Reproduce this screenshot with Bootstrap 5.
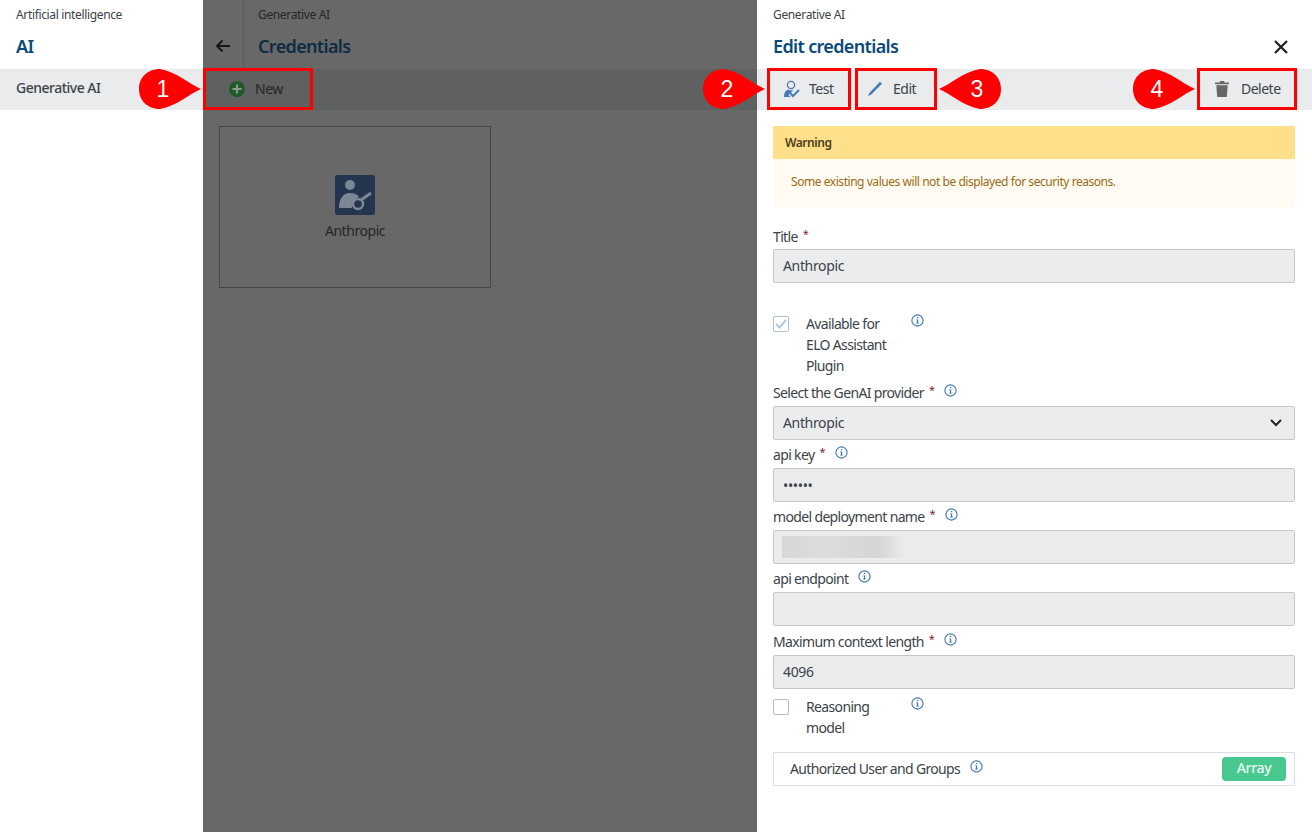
<!DOCTYPE html>
<html lang="en">
<head>
  <meta charset="UTF-8" />
  <meta name="viewport" content="width=device-width, initial-scale=1.0" />
  <title>Edit credentials</title>
  <link href="https://cdn.jsdelivr.net/npm/bootstrap@5.3.3/dist/css/bootstrap.min.css" rel="stylesheet" />
  <style>
    html, body { height: 100%; }
    body { font-family: "Noto Sans", sans-serif; font-size: 14px; letter-spacing: -.65px; color: #3c4349; overflow: hidden; background: #fff; }
    .app-shell { height: 832px; }
    .crumb { height: 28px; line-height: 29px; font-size: 12px; letter-spacing: -.35px; }
    .page-title { height: 41px; margin: 0; padding-top: 6px; font-size: 18px; line-height: 24px; font-weight: 600; color: #0a4a78; letter-spacing: -.65px; }
    .tool-band { height: 41px; background: #e9ebed; }

    .side-col { width: 203px; flex: none; }
    .side-head { padding: 0 16px; }
    .side-item { height: 41px; line-height: 38px; padding-left: 16px; background: #e9ebed; font-weight: 500; letter-spacing: -.5px; }

    .mid-col { width: 554px; flex: none; background: #686868; color: #242628; }
    .mid-top { height: 69px; }
    .back-cell { width: 41px; border-right: 1px solid #5d5d5d; }
    .mid-title-cell { padding-left: 14px; }
    .mid-col .page-title { color: #0e2c44; }
    .mid-col .tool-band { background: #5f6060; }
    .tile { width: 272px; height: 162px; margin: 16px 0 0 16px; border: 1px solid #474747; }
    .tile-icon { width: 40px; height: 40px; margin-top: 48px; }
    .tile-text { margin-top: 5px; line-height: 22px; letter-spacing: -.45px; }

    .edit-col { width: 555px; flex: none; position: relative; }
    .edit-head { padding: 0 16px; }
    .close-x { margin-top: 12px; margin-right: 8px; }
    .edit-tools { padding-left: 10px; padding-right: 15px; }
    .tool-btn { position: relative; height: 42px; margin-top: -1px; border: 3px solid #f00; border-radius: 0; padding: 0 0 1px; font-size: 14px; letter-spacing: -.5px; color: #3c4349; display: flex; align-items: center; }
    .tool-btn:hover, .tool-btn:disabled { border-color: #f00; }
    .btn-new { width: 110px; padding-left: 23px; gap: 10px; color: #242628; }
    .btn-test { width: 84px; padding-left: 13px; gap: 9px; }
    .btn-edit { width: 82px; padding-left: 9px; gap: 10px; margin-left: 4px; }
    .btn-delete { width: 100px; padding-left: 15px; gap: 12px; }

    .pin { position: absolute; top: -2px; width: 62px; height: 40px; color: #fff; font-family: "Liberation Sans", sans-serif; font-size: 23px; letter-spacing: 0; z-index: 5; }
    .pin svg { position: absolute; inset: 0; }
    .pin span { position: absolute; top: 0; line-height: 41px; width: 40px; text-align: center; }
    .pin-left { left: -67px; }
    .pin-left span { left: 4px; }
    .pin-right { right: -67px; }
    .pin-right span { right: 4px; }
    .pin-flip { transform: scaleX(-1); }

    .edit-body { padding: 16px 17px 0 16px; }
    .warn-box { border-radius: 2px; overflow: hidden; font-size: 12px; letter-spacing: -.45px; margin-bottom: 16px; }
    .warn-head { height: 33px; line-height: 33px; padding-left: 12px; background: #ffdf8a; color: #4a3d18; font-weight: 600; }
    .warn-text { height: 48px; line-height: 46px; padding-left: 18px; background: #fffbf3; color: #9a6c12; }

    .fld-label { height: 28px; display: flex; align-items: center; gap: 5px; }
    .fld-label.first { height: 26px; }
    .fld-label.tall { height: 29px; padding-top: 1px; }
    .req { color: #8b1a2b; font-size: 11px; margin-top: -4px; }
    .info-i { width: 13px; height: 13px; flex: none; margin-left: 5px; margin-top: -4px; }
    .form-control.fld-input, .form-select.fld-input { height: 34px; padding: 0 9px; font-size: 14px; letter-spacing: -.35px; background-color: #ebecee; border: 1px solid #c4c6c9; border-radius: 2px; color: #3c4349; opacity: 1; }
    .form-select.fld-input { background-image: url("data:image/svg+xml,%3csvg xmlns='http://www.w3.org/2000/svg' viewBox='0 0 12 8'%3e%3cpath fill='none' stroke='%23222' stroke-width='2' d='M1 1l5 5 5-5'/%3e%3c/svg%3e"); background-size: 12px 8px; background-position: right 12px center; }
    .form-control.input-up, .form-select.input-up { padding-bottom: 2px; }
    .blur-wrap { position: relative; }
    .blur-patch { position: absolute; left: 9px; top: 6px; width: 124px; height: 22px; background: linear-gradient(90deg, #d6d7d9 0, #dcdddf 35%, #d4d5d7 78%, #ebecee 100%); }

    .check-row { display: flex; line-height: 21px; }
    .check-first { margin-top: 30px; margin-bottom: 2px; }
    .check-second { margin-top: 7px; }
    .check-box { width: 16px; height: 16px; flex: none; margin-top: 3px; border: 1px solid #b9bcc0; border-radius: 2px; background: #fff; }
    .check-box.on { border-color: #a9c1dc; }
    .check-text { width: 90px; margin-left: 17px; margin-right: 15px; }
    .check-row .info-i { margin-left: 0; margin-top: 1px; }
    .array-row { height: 34px; margin-top: 14px; border: 1px solid #dcdee0; padding: 0 8px 2px 16px; display: flex; align-items: center; }
    .array-row .info-i { margin-left: 10px; }
    .array-pill { width: 64px; height: 24px; line-height: 22px; margin-top: 2px; margin-left: auto; text-align: center; background: #48c78e; color: #eafff5; border-radius: 4px; font-weight: 500; letter-spacing: -.3px; }
  </style>
</head>
<body>
  <svg width="0" height="0" class="position-absolute">
    <symbol id="pin-shape" viewBox="0 0 62 40"><path fill="#f00" d="M62 20C50 15 38 3 21 0 8 0 0 9 0 20s8 20 21 20C38 37 50 25 62 20Z"/></symbol>
    <symbol id="info-mark" viewBox="0 0 13 13">
      <circle cx="6.5" cy="6.5" r="5.6" fill="none" stroke="#3f77b5" stroke-width="1.1"/>
      <path fill="#3f77b5" d="M5.9 3h1.3v1.300H5.900zM5.200 5.400h2v3.300h.7v.9H5.100v-.9h.8V6.300h-.7z"/>
    </symbol>
  </svg>

  <div class="app-shell d-flex">
    <!-- left menu -->
    <div class="side-col">
      <div class="side-head">
        <div class="crumb">Artificial intelligence</div>
        <h1 class="page-title">AI</h1>
      </div>
      <div class="side-item">Generative AI</div>
    </div>

    <!-- dimmed list -->
    <div class="mid-col">
      <div class="mid-top d-flex">
        <div class="back-cell d-flex align-items-end justify-content-center">
          <svg width="16" height="14" viewBox="0 0 16 14" class="mb-3"><path fill="none" stroke="#161718" stroke-width="2" d="M15 7H2M7.500 1.500 2 7l5.500 5.500"/></svg>
        </div>
        <div class="mid-title-cell">
          <div class="crumb">Generative AI</div>
          <h2 class="page-title">Credentials</h2>
        </div>
      </div>
      <div class="tool-band d-flex">
        <button type="button" class="btn tool-btn btn-new">
          <svg width="16" height="16" viewBox="0 0 16 16"><circle cx="8" cy="8" r="8" fill="#1f5a2b"/><path stroke="#8a9a8e" stroke-width="2" d="M8 3.500v9M3.500 8h9"/></svg>
          New
          <span class="pin pin-left"><svg width="62" height="40"><use href="#pin-shape"/></svg><span>1</span></span>
        </button>
      </div>
      <div class="tile d-flex flex-column align-items-center">
        <svg class="tile-icon" viewBox="0 0 40 40">
          <rect width="40" height="40" rx="2" fill="#24364f"/>
          <circle cx="15" cy="10" r="5" fill="#7c8794"/>
          <path fill="#7c8794" d="M4 33c0-9 4-15 11-15 4 0 7 1 9 4-4 1-8 5-7 11z"/>
          <circle cx="23" cy="29" r="5" fill="none" stroke="#7c8794" stroke-width="2.500"/>
          <path stroke="#7c8794" stroke-width="3" d="m26 25 10-7"/>
        </svg>
        <div class="tile-text">Anthropic</div>
      </div>
    </div>

    <!-- edit panel -->
    <div class="edit-col">
      <div class="edit-head">
        <div class="crumb">Generative AI</div>
        <div class="d-flex justify-content-between align-items-start">
          <h2 class="page-title">Edit credentials</h2>
          <svg width="14" height="14" viewBox="0 0 14 14" class="close-x"><path stroke="#1d1f21" stroke-width="2.200" d="m1 1 12 12M13 1 1 13"/></svg>
        </div>
      </div>
      <div class="tool-band edit-tools d-flex">
        <button type="button" class="btn tool-btn btn-test">
          <svg width="17" height="18" viewBox="0 0 17 18"><circle cx="8" cy="5" r="3.600" fill="none" stroke="#4a7ab5" stroke-width="1.300"/><path fill="#4a7ab5" d="M1 17c0-4 1-6 4-7.500 1.500 1 4 1 5.500.5L5.500 15 7.500 17z"/><path fill="none" stroke="#4a7ab5" stroke-width="2" d="m7 13 3 3 6-6"/></svg>
          Test
          <span class="pin pin-left"><svg width="62" height="40"><use href="#pin-shape"/></svg><span>2</span></span>
        </button>
        <button type="button" class="btn tool-btn btn-edit">
          <svg width="16" height="16" viewBox="0 0 16 16"><path fill="#4a7ab5" d="M13 .8 15 2.800 4.300 13.500 1 15l1.500-3.300z"/></svg>
          Edit
          <span class="pin pin-right"><svg width="62" height="40" class="pin-flip"><use href="#pin-shape"/></svg><span>3</span></span>
        </button>
        <button type="button" class="btn tool-btn btn-delete ms-auto">
          <svg width="14" height="16" viewBox="0 0 14 16"><path fill="#666769" d="M5 0h4l.5 1.500H14V3.200H0V1.500h4.500zM1.300 4.200h11.400l-.9 11.800H2.200z"/></svg>
          Delete
          <span class="pin pin-left"><svg width="62" height="40"><use href="#pin-shape"/></svg><span>4</span></span>
        </button>
      </div>

      <div class="edit-body">
        <div class="warn-box">
          <div class="warn-head">Warning</div>
          <div class="warn-text">Some existing values will not be displayed for security reasons.</div>
        </div>

        <div class="fld-label first">Title <span class="req">*</span></div>
        <input class="form-control fld-input input-up" value="Anthropic" disabled />

        <div class="check-row check-first">
          <span class="check-box on d-flex align-items-center justify-content-center"><svg width="12" height="10" viewBox="0 0 12 10"><path fill="none" stroke="#b4c8de" stroke-width="2" d="m1 5 3.500 3.500L11 1"/></svg></span>
          <span class="check-text">Available for ELO Assistant Plugin</span>
          <svg class="info-i"><use href="#info-mark"/></svg>
        </div>

        <div class="fld-label">Select the GenAI provider <span class="req">*</span><svg class="info-i"><use href="#info-mark"/></svg></div>
        <select class="form-select fld-input input-up" disabled><option>Anthropic</option></select>

        <div class="fld-label">api key <span class="req">*</span><svg class="info-i"><use href="#info-mark"/></svg></div>
        <input class="form-control fld-input" type="password" value="secret" disabled />

        <div class="fld-label">model deployment name <span class="req">*</span><svg class="info-i"><use href="#info-mark"/></svg></div>
        <div class="blur-wrap">
          <input class="form-control fld-input" disabled />
          <div class="blur-patch"></div>
        </div>

        <div class="fld-label">api endpoint <svg class="info-i"><use href="#info-mark"/></svg></div>
        <input class="form-control fld-input" disabled />

        <div class="fld-label tall">Maximum context length <span class="req">*</span><svg class="info-i"><use href="#info-mark"/></svg></div>
        <input class="form-control fld-input input-up" value="4096" disabled />

        <div class="check-row check-second">
          <span class="check-box"></span>
          <span class="check-text">Reasoning model</span>
          <svg class="info-i"><use href="#info-mark"/></svg>
        </div>

        <div class="array-row">
          Authorized User and Groups
          <svg class="info-i"><use href="#info-mark"/></svg>
          <span class="array-pill">Array</span>
        </div>
      </div>
    </div>
  </div>

  <script src="https://cdn.jsdelivr.net/npm/bootstrap@5.3.3/dist/js/bootstrap.bundle.min.js"></script>
</body>
</html>
